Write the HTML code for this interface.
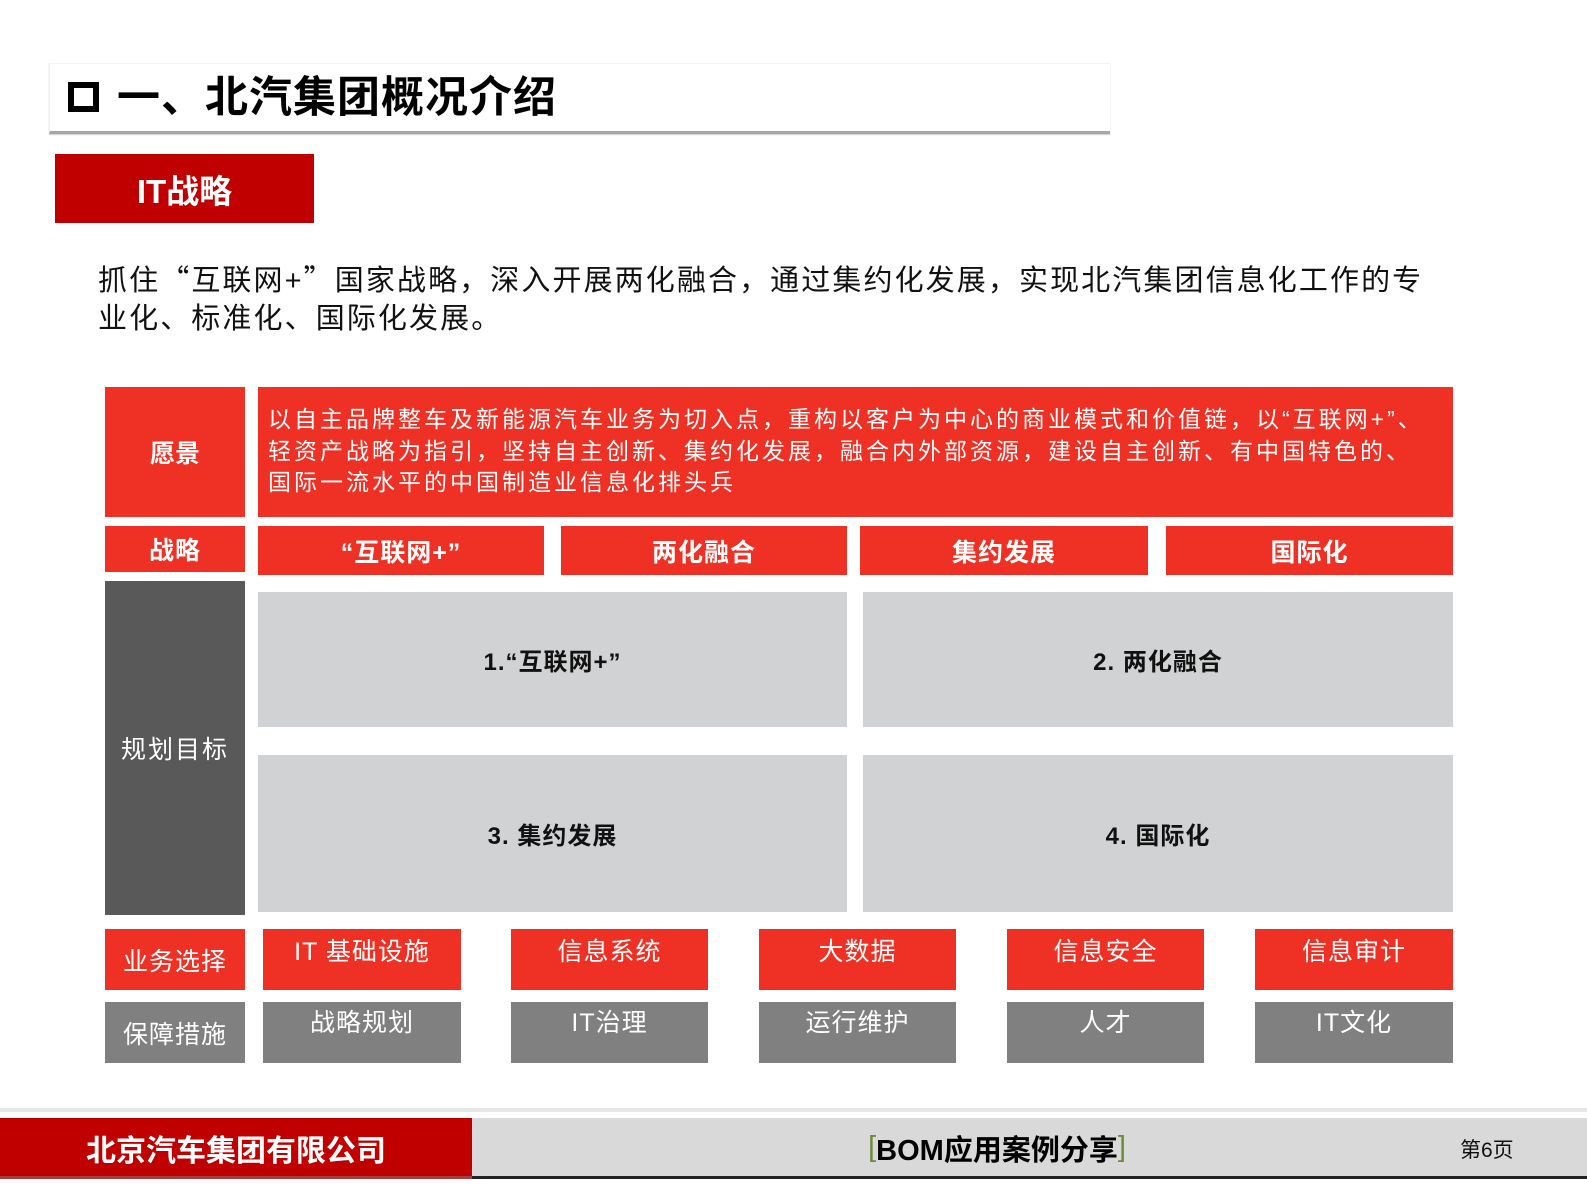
<!DOCTYPE html>
<html><head><meta charset="utf-8"><style>
*{margin:0;padding:0;box-sizing:border-box}
body{width:1587px;height:1190px;background:#fff;position:relative;overflow:hidden;font-family:"Liberation Sans","Noto Sans CJK SC",sans-serif}
.a{position:absolute}
.c{display:flex;align-items:center;justify-content:center;color:#fff;white-space:nowrap}
.r{background:#ee3124}
.g{background:#808080}
.l{background:#d1d2d4;color:#111;font-weight:bold;font-size:24px;letter-spacing:1px}
.q{font-family:"Noto Sans CJK SC",sans-serif}
</style></head><body>
<div class="a" style="left:49px;top:63px;width:1061px;height:71px;border-bottom:3px solid #a6a6a6;border-left:1px solid #eee;border-top:1px solid #f3f3f3;box-shadow:0 1px 1px #ccc"></div>
<div class="a" style="left:68px;top:82px;width:31px;height:30px;border:6px solid #000"></div>
<div class="a" style="left:117px;top:70px;font-size:43px;font-weight:bold;color:#000;line-height:56px;letter-spacing:1px">一、北汽集团概况介绍</div>
<div class="a c" style="left:55px;top:154px;width:259px;height:69px;background:#c00000;font-size:33px;font-weight:bold">IT战略</div>
<div class="a" style="left:98px;top:259px;font-size:29px;line-height:38px;color:#111;white-space:nowrap;letter-spacing:2.1px">抓住<span class="q">“</span>互联网+<span class="q">”</span>国家战略，深入开展两化融合，通过集约化发展，实现北汽集团信息化工作的专<br>业化、标准化、国际化发展。</div>

<div class="a c r" style="left:105px;top:387px;width:140px;height:130px;font-size:25px;font-weight:bold">愿景</div>
<div class="a r" style="left:258px;top:387px;width:1195px;height:130px;color:#fff;font-size:23px;line-height:31.5px;padding:17px 0 0 10px;white-space:nowrap;letter-spacing:3px">以自主品牌整车及新能源汽车业务为切入点，重构以客户为中心的商业模式和价值链，以“互联网+”、<br>轻资产战略为指引，坚持自主创新、集约化发展，融合内外部资源，建设自主创新、有中国特色的、<br>国际一流水平的中国制造业信息化排头兵</div>

<div class="a c r" style="left:105px;top:526px;width:140px;height:46px;font-size:25px;font-weight:bold;letter-spacing:1px">战略</div>
<div class="a c r" style="left:258px;top:526px;width:286px;height:49px;font-size:25px;font-weight:bold;letter-spacing:1px">“互联网+”</div>
<div class="a c r" style="left:561px;top:526px;width:286px;height:49px;font-size:25px;font-weight:bold;letter-spacing:1px">两化融合</div>
<div class="a c r" style="left:860px;top:526px;width:288px;height:49px;font-size:25px;font-weight:bold;letter-spacing:1px">集约发展</div>
<div class="a c r" style="left:1166px;top:526px;width:287px;height:49px;font-size:25px;font-weight:bold;letter-spacing:1px">国际化</div>

<div class="a c" style="left:105px;top:581px;width:140px;height:334px;background:#595959;font-size:25px;letter-spacing:2px">规划目标</div>
<div class="a c l" style="left:258px;top:592px;width:589px;height:135px">1.“互联网+”</div>
<div class="a c l" style="left:863px;top:592px;width:590px;height:135px">2. 两化融合</div>
<div class="a c l" style="left:258px;top:755px;width:589px;height:157px">3. 集约发展</div>
<div class="a c l" style="left:863px;top:755px;width:590px;height:157px">4. 国际化</div>

<div class="a c r" style="left:105px;top:929px;width:140px;height:61px;font-size:25px;letter-spacing:1px">业务选择</div>
<div class="a c g" style="left:105px;top:1002px;width:140px;height:61px;font-size:25px;letter-spacing:1px">保障措施</div>

<div class="a c r" style="left:263px;top:929px;width:198px;height:61px;font-size:25px;align-items:flex-start;padding-top:3px;letter-spacing:1px">IT 基础设施</div>
<div class="a c r" style="left:511px;top:929px;width:197px;height:61px;font-size:25px;align-items:flex-start;padding-top:3px;letter-spacing:1px">信息系统</div>
<div class="a c r" style="left:759px;top:929px;width:197px;height:61px;font-size:25px;align-items:flex-start;padding-top:3px;letter-spacing:1px">大数据</div>
<div class="a c r" style="left:1007px;top:929px;width:197px;height:61px;font-size:25px;align-items:flex-start;padding-top:3px;letter-spacing:1px">信息安全</div>
<div class="a c r" style="left:1255px;top:929px;width:198px;height:61px;font-size:25px;align-items:flex-start;padding-top:3px;letter-spacing:1px">信息审计</div>

<div class="a c g" style="left:263px;top:1002px;width:198px;height:61px;font-size:25px;align-items:flex-start;padding-top:1px;letter-spacing:1px">战略规划</div>
<div class="a c g" style="left:511px;top:1002px;width:197px;height:61px;font-size:25px;align-items:flex-start;padding-top:1px;letter-spacing:1px">IT治理</div>
<div class="a c g" style="left:759px;top:1002px;width:197px;height:61px;font-size:25px;align-items:flex-start;padding-top:1px;letter-spacing:1px">运行维护</div>
<div class="a c g" style="left:1007px;top:1002px;width:197px;height:61px;font-size:25px;align-items:flex-start;padding-top:1px;letter-spacing:1px">人才</div>
<div class="a c g" style="left:1255px;top:1002px;width:198px;height:61px;font-size:25px;align-items:flex-start;padding-top:1px;letter-spacing:1px">IT文化</div>

<div class="a" style="left:0;top:1108px;width:1587px;height:4px;background:#e6e6e6"></div>
<div class="a" style="left:0;top:1118px;width:1587px;height:59px;background:#d9d9d9"></div>
<div class="a c" style="left:0;top:1118px;width:472px;height:59px;background:#c00000;font-size:30px;font-weight:bold">北京汽车集团有限公司</div>
<div class="a" style="left:472px;top:1176px;width:1115px;height:3px;background:#222"></div>
<div class="a" style="left:0;top:1176px;width:472px;height:3px;background:#a04040"></div>
<div class="a c" style="left:760px;top:1118px;width:474px;height:59px;font-size:29px;font-weight:bold;color:#000"><span style="color:#6a8c3a;font-weight:normal">[</span>BOM应用案例分享<span style="color:#6a8c3a;font-weight:normal">]</span></div>
<div class="a" style="left:1460px;top:1134px;font-size:21px;color:#111">第6页</div>
</body></html>
